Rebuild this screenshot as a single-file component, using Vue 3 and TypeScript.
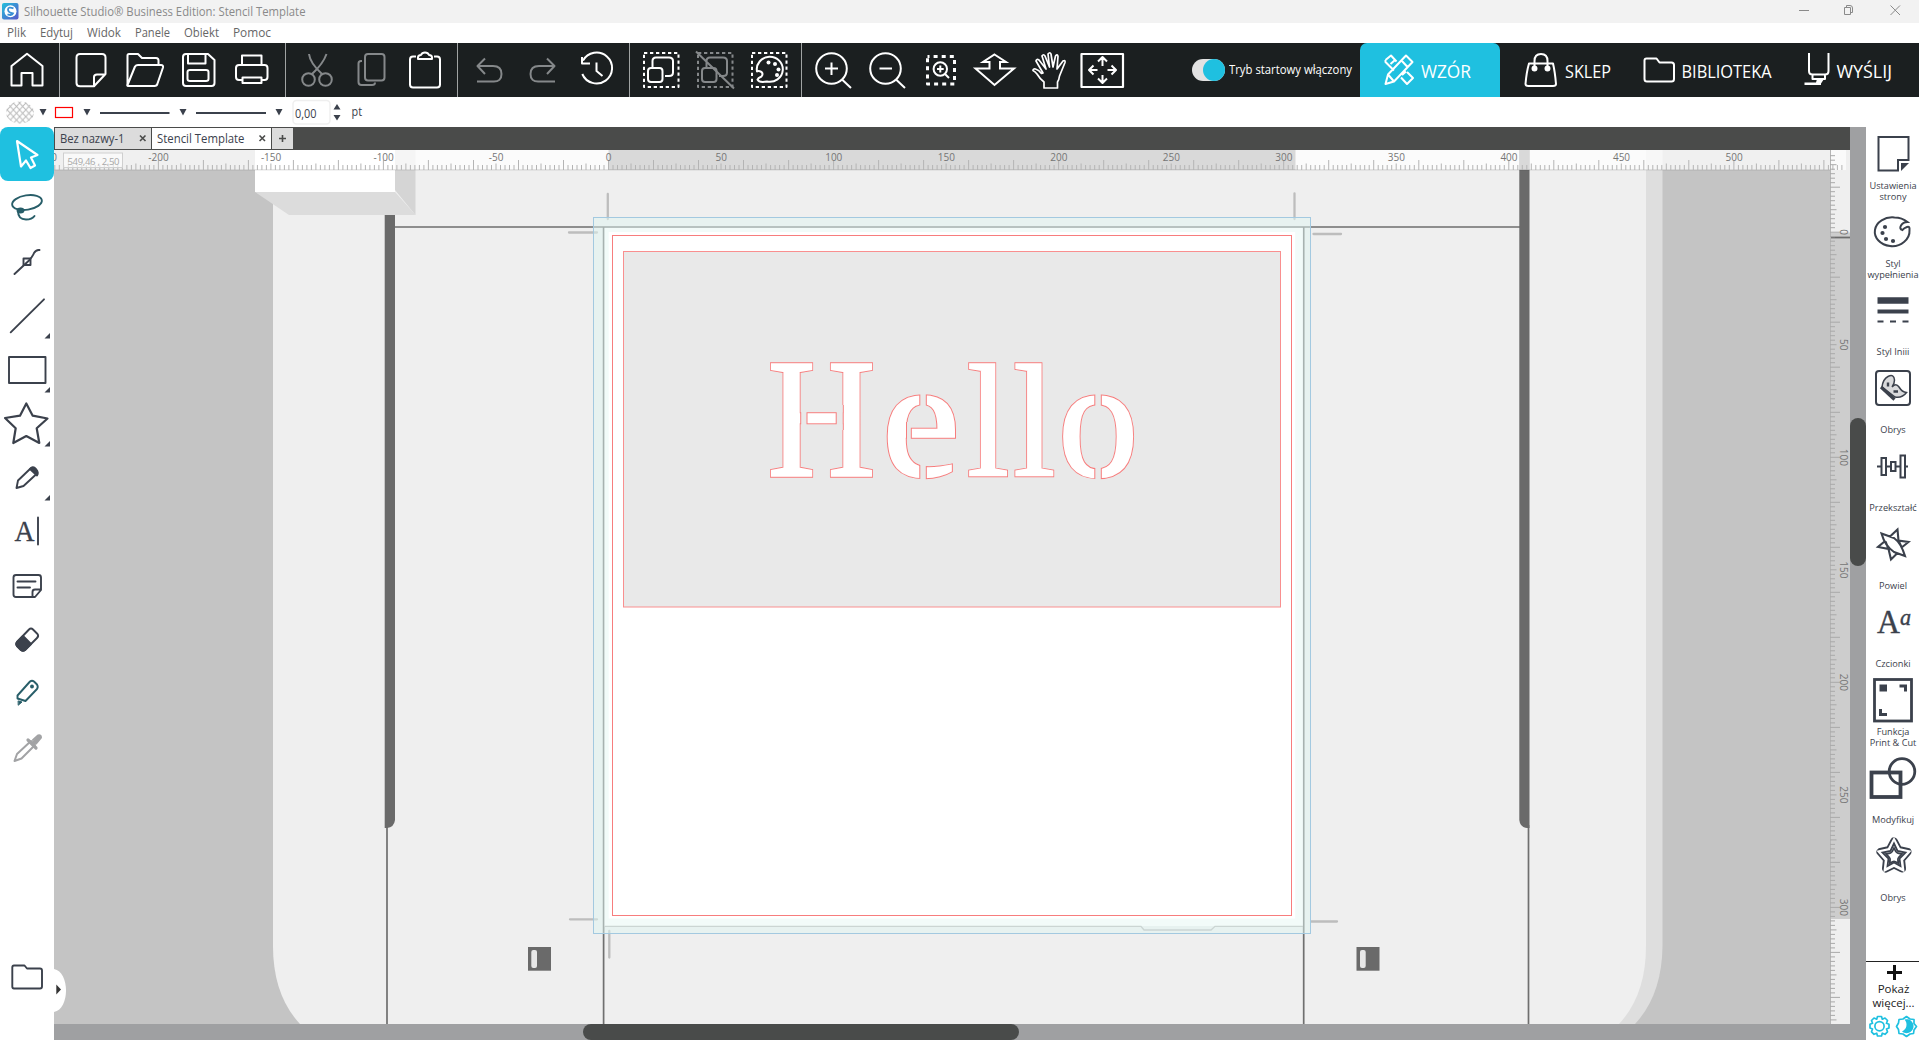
<script setup lang="ts">
interface Cell { x: number; w: number; art: string; dim?: boolean }
interface Label { text: string; x: number; w: number }

const menu: Label[] = [
  { text: 'Plik', x: 7, w: 19 },
  { text: 'Edytuj', x: 40, w: 33 },
  { text: 'Widok', x: 87, w: 34 },
  { text: 'Panele', x: 135, w: 35 },
  { text: 'Obiekt', x: 184, w: 35 },
  { text: 'Pomoc', x: 233, w: 38 },
]
const menuCells = menu.map((m, i) => ({ ...m, cell: (menu[i + 1]?.x ?? 280) - m.x }))

// Toolbar groups; every cell draws in window coordinates through its viewBox.
const groups: Cell[][] = [
  [{ x: 0, w: 59, art: '<path d="M11.500 85.500V66L27 53.800 42.500 66V85.500H32.500V73H21.500V85.500Z"/>' }],
  [
    { x: 60, w: 57, art: '<path d="M80 54H102Q105.500 54 105.500 57.500V74L94 86.200H80Q76.500 86.200 76.500 83V57.500Q76.500 54 80 54ZM94 86V77Q94 74.500 97 74.500H105"/>' },
    { x: 117, w: 55, art: '<path d="M127.500 84V55.500Q127.500 54 129 54H138L142 58H156Q158.500 58 158.500 60.500V65M127.300 85.500 135 66.500Q136 65 138 65H161Q163.500 65 163 67.500L157.500 83.500Q157 86 154.500 86H128Q127 86 127.300 84.500"/>' },
    { x: 172, w: 54, art: '<path d="M186 54H208L214.500 60V83Q214.500 86 211.500 86H186Q183 86 183 83V57Q183 54 186 54ZM188 54V63.500H205.500V54M190 70H206Q208.500 70 208.500 72V79Q208.500 81 206 81H190Q187.500 81 187.500 79V72Q187.500 70 190 70Z"/>' },
    { x: 226, w: 59, art: '<path d="M242 65V55.500H261.500V65M242 80H239Q236 80 236 77V68Q236 65 239 65H264.500Q267.500 65 267.500 68V77Q267.500 80 264.500 80H261.500M242.500 77.500H261.500V83H242.500Z"/>' },
  ],
  [
    { x: 286, w: 57, dim: true, art: '<circle cx="308.500" cy="79.500" r="6.300"/><circle cx="325.500" cy="79.500" r="6.300"/><path d="M309 54Q310 63 322 74M326.500 54Q323 64 312 74"/>' },
    { x: 343, w: 52, dim: true, art: '<rect x="365" y="54" width="19.500" height="26.500" rx="3"/><path d="M362 61H361Q358.500 61 358.500 63.500V82Q358.500 85 361.500 85H372Q375 85 375 82.500"/>' },
    { x: 395, w: 62, art: '<path d="M416 56.500H413Q410 56.500 410 59.500V84.500Q410 87.500 413 87.500H437Q440 87.500 440 84.500V59.500Q440 56.500 437 56.500H434M418 57.500Q418 55 421 55Q422 52.500 425 52.500T429 55Q432 55 432 57.500V59H418Z"/>' },
  ],
  [
    { x: 458, w: 61, dim: true, art: '<path d="M485 58.500 477.500 66 485 74M478 66H493Q501.500 66 501.500 74T493 81.500H477"/>' },
    { x: 519, w: 52, dim: true, art: '<path d="M547 58.500 554.500 66 547 74M554 66H539Q530.500 66 530.500 74T539 81.500H555"/>' },
    { x: 571, w: 58, art: '<path d="M583 60.500A15.500 15.500 0 1 1 582.300 74M582 57V63.500H590M596.500 62.500V71L602.500 76"/>' },
  ],
  [
    { x: 630, w: 57, art: '<rect x="644" y="53" width="34.500" height="34" stroke-dasharray="3.300 2.700"/><path d="M652.500 67V61Q652.500 57.500 656 57.500H669Q673 57.500 673 61V72.500Q673 76 669 76H665"/><rect x="648" y="68" width="14.500" height="14" rx="3"/>' },
    { x: 687, w: 54, dim: true, art: '<rect x="698" y="53" width="34.500" height="34" stroke-dasharray="3.300 2.700"/><path d="M706.500 67V61Q706.500 57.500 710 57.500H723Q727 57.500 727 61V72.500Q727 76 723 76H719M696 51.500 734 88.500"/><rect x="702" y="68" width="14.500" height="14" rx="3"/>' },
    { x: 741, w: 60, art: '<rect x="752" y="53" width="34.500" height="34" stroke-dasharray="3.300 2.700"/><path d="M757 71.500A13 12.500 0 1 1 767 81.500Q759 83 757.500 79.500Q758 78 761.500 76.500Q763.500 74 761.500 72Q758.500 70.500 757 71.500Z"/><g fill="#fff" stroke="none"><circle cx="768.500" cy="62.500" r="2"/><circle cx="775" cy="64" r="2"/><circle cx="778.500" cy="69.500" r="2"/><circle cx="777" cy="75" r="2"/></g>' },
  ],
  [
    { x: 802, w: 58, art: '<circle cx="831.500" cy="68.500" r="15.300"/><path d="M842 79.500 851 88M831.500 62.500V75M825 68.500H838"/>' },
    { x: 860, w: 54, art: '<circle cx="885.500" cy="68.500" r="15.300"/><path d="M896 79.500 905 88M879.500 68.500H892"/>' },
    { x: 914, w: 52, art: '<rect x="927.500" y="56.500" width="27" height="27.500" stroke-width="3" stroke-dasharray="4 4.100" stroke-dashoffset="2"/><circle cx="940.300" cy="69" r="6.700"/><path d="M945 74 949 78M940.300 65.500V72.500M937 69H943.700"/>' },
    { x: 966, w: 60, art: '<path d="M994.500 54.500 1006 62H1000V68.500H1014L994.500 85 975.500 68.500H989.500V62H983Z" stroke-linejoin="miter"/>' },
    { x: 1026, w: 46, art: '<path stroke-width="1.700" d="M1044 88V82Q1040 79 1037 74Q1035 71.500 1033 70.500Q1033 68.500 1035.500 69Q1039 70 1041.500 73.500L1043 73 1036 61Q1036.500 58.500 1039 60L1046 69 1042 56Q1043.500 53.500 1045 56L1049.500 67 1048 54Q1050 51.500 1051 54L1053 67 1055.500 56Q1057.500 53.500 1058 56.500L1057 69 1063 61Q1065.500 59.500 1065 62.500L1059.500 76Q1059 80 1057.500 82V88Z"/>' },
    { x: 1072, w: 60, art: '<rect x="1081.500" y="54" width="41.500" height="33" stroke-width="2.200"/><path d="M1102.500 57.500V66M1102.500 75V83M1089.500 70H1097.500M1107.500 70H1116M1098 61.500 1102.500 57 1107 61.500M1098 78.500 1102.500 83 1107 78.500M1093.500 65.500 1089 70 1093.500 74.500M1111.500 65.500 1116 70 1111.500 74.500"/>' },
  ],
]

const nav = [
  { text: 'WZÓR', x: 1360, w: 140, tx: 1421, tw: 50, active: true, art: '<path d="M1385.500 60 1391 55.500 1396.500 61.500M1407 72 1413 78 1407 84 1401 77.500M1394 70.500 1385.500 62V60M1390.500 64 1394.500 60.500M1402 75 1406 71.500M1385.500 84 1388 74.500 1406 55.500 1412.500 62 1394 81.500ZM1388 74.500 1394 81.500M1401.500 60.500 1407.500 67"/>' },
  { text: 'SKLEP', x: 1500, w: 125, tx: 1565, tw: 46, art: '<path d="M1529 63.500H1553Q1555 72 1556 84Q1556 86 1553 86H1528.500Q1525.500 86 1525.500 84Q1526.500 72 1529 63.500ZM1534.500 68V61Q1534.500 54 1541 54T1547.500 61V68"/><circle cx="1534.500" cy="68.500" r="2" fill="#fff"/><circle cx="1547.500" cy="68.500" r="2" fill="#fff"/>' },
  { text: 'BIBLIOTEKA', x: 1625, w: 160, tx: 1681.500, tw: 90, art: '<path d="M1646.500 58.500H1656.500L1659.500 62.500H1671.500Q1674 62.500 1674 65V79Q1674 81.500 1671.500 81.500H1647Q1644.500 81.500 1644.500 79V60.500Q1644.500 58.500 1646.500 58.500Z"/>' },
  { text: 'WYŚLIJ', x: 1785, w: 134, tx: 1836.500, tw: 55.500, art: '<path d="M1809 53V71Q1809 74.500 1812.500 74.500H1825Q1828.500 74.500 1828.500 71V53M1812.500 75V79H1825V75"/><path d="M1817 79H1824L1821 83.500V85H1804.500V82.500H1816Z" fill="#fff" stroke="none"/>' },
]

const tools: { art: string; more?: boolean; active?: boolean }[] = [
  { active: true, art: '<path stroke="#fff" stroke-width="2.200" d="M17 141 37.500 155 31 157.500 35 165.500 30.500 168 26 160.500 21 166.500Z"/>' },
  { art: '<g stroke="#285e69"><ellipse cx="27" cy="202.500" rx="15" ry="7.200" transform="rotate(-9 27 202.500)"/><path d="M18 211Q18 219.500 26 219.500 32 219.500 34.500 216"/><ellipse cx="20.500" cy="210.500" rx="3" ry="2" fill="#285e69"/></g>' },
  { art: '<path d="M14.500 274 29 260.500Q33 256 34 253 36 249.500 39.500 250"/><rect x="23.500" y="258.500" width="7" height="6.500"/>' },
  { more: true, art: '<path d="M10.700 332.300 44 299.300"/>' },
  { more: true, art: '<rect x="9" y="357" width="36.500" height="26"/>' },
  { more: true, art: '<path stroke-width="2.200" d="M26.300 403.500 32.700 415.700 47.500 418.500 36.700 428.300 39.300 443 26.300 436 13.300 443 15.700 428.300 5 418 20 415.700Z"/>' },
  { more: true, art: '<path d="M16.500 488 18 480.500 30.500 468.500Q33 466.500 35.500 469.500T36.500 474L23.500 486Z"/><path d="M30 469Q33 465.500 36 469T37 475.500Z" fill="#3b414c"/>' },
  { art: '<text x="14.500" y="540.500" font-size="30" textLength="20" lengthAdjust="spacingAndGlyphs" font-family="Liberation Serif,serif" fill="#3b414c" stroke-width=".3">A</text><path d="M38 517.500V544.500"/>' },
  { art: '<path d="M16 575H38.500Q41 575 41 577.500V590L35 597H16Q13.500 597 13.500 594.500V577.500Q13.500 575 16 575ZM32.500 597V592Q32.500 589.500 35 589.500H41M17.500 581.500H35.500M17.500 587.500H30"/>' },
  { art: '<path d="M29 629.500Q31 627.500 33 629.500L37.500 634Q39 636 37 638L25 650Q23 651.500 21 650L17 646Q15.500 644 17 642Z"/><path d="M23 636 31 644 25 650Q23 651.500 21 650L17 646Q15.500 644 17 642Z" fill="#3b414c"/>' },
  { art: '<g stroke="#285e69"><path d="M17.500 695.500 30 681.500Q32 680 34 681.500L37 684.500Q38.500 687 37 689L25.500 701 17.500 698.500Z"/><circle cx="32" cy="686.500" r="1" fill="#285e69"/><path d="M18.500 701 22 702 18.500 705Z" fill="#285e69" stroke-width="1"/></g>' },
  { art: '<g stroke="#a2a3a5" stroke-width="2"><path d="M14.500 761 17 754 31 741 35 745 21.500 758.500Z"/><path d="M28 740 36 748M34 742.500 39.500 737" stroke-width="3.200"/><path d="M33 740 38 735.500Q41 734.500 41 737.500L36 743.500"/></g>' },
]

const panels: { lines: string[]; art: string }[] = [
  { lines: ['Ustawienia', 'strony'], art: '<path d="M1908.500 160V137H1878.500V170.500H1898V160Z"/><path d="M1901 163H1909L1901 171Z" fill="#3b414c" stroke="none"/>' },
  { lines: ['Styl', 'wypełnienia'], art: '<g transform="translate(1 0)"><path d="M1906.500 222Q1901 217.500 1893.500 217.500A17 14 0 0 0 1889 246Q1897 247 1903 242T1908.500 230Q1909 226 1906 227T1901.500 230Q1898 229 1900 225.500T1906.500 222Z"/><g fill="#3b414c" stroke="none"><circle cx="1884" cy="227" r="2.100"/><circle cx="1881.500" cy="233" r="2.100"/><circle cx="1885" cy="239" r="2.100"/><circle cx="1892" cy="241" r="2.100"/></g></g>' },
  { lines: ['Styl Iniii'], art: '<path d="M1877.500 300.500H1908.500" stroke-width="6.500"/><path d="M1877.500 311.500H1908.500" stroke-width="4"/><path d="M1877.500 321.500H1908.500" stroke-dasharray="6 6.500"/>' },
  { lines: ['Obrys'], art: '<rect x="1876" y="371" width="34" height="34" rx="3"/><path fill="#d9dadc" stroke-width="1.500" d="M1882 387Q1883 379 1888 376.500 1894 373.500 1894.500 380 1894.500 384 1892 387 1896 382.500 1899 387 1902 392 1906.500 392.500 1902 398.500 1895 397Z"/><path d="M1881 387 1894.500 399.500" stroke-width="3.200"/><path d="M1888 382.500V386.500M1893.500 391.500H1898" stroke-width="2.400"/>' },
  { lines: ['Przekształć'], art: '<path d="M1877 466.500H1881M1886 466.500H1890.500M1896 466.500H1900.500M1905 466.500H1908"/><rect x="1881.500" y="458" width="4.500" height="17"/><rect x="1891" y="462" width="4.500" height="9"/><rect x="1900.500" y="455.500" width="4.500" height="22"/>' },
  { lines: ['Powiel'], art: '<path stroke-width="2.100" d="M1881.500 533.500 1894 538Q1901 543 1905 556L1894 552Q1885 546 1881.500 533.500ZM1890 536.500 1897.500 529.500 1898.500 540.500 1908.500 542 1901 548M1884.500 541.500 1878 547 1888.500 549 1891 559.500 1897.500 553M1888.500 549 1885.500 541.500M1898.500 540.500 1901.500 547"/>' },
  { lines: ['Czcionki'], art: '<text x="1877" y="633" font-size="33" textLength="34" lengthAdjust="spacingAndGlyphs" font-family="Liberation Serif,serif" fill="#3b414c" stroke-width=".4">A<tspan dy="-8" font-size="23" font-style="italic">a</tspan></text>' },
  { lines: ['Funkcja', 'Print & Cut'], art: '<rect x="1874.500" y="679.500" width="37" height="41.500" stroke-width="2.800"/><path d="M1879.500 684.500H1887V691.500H1879.500Z" fill="#3b414c" stroke="none"/><path d="M1899.500 686H1905.500V691.500M1880.500 709V714.500H1887" stroke-width="3"/>' },
  { lines: ['Modyfikuj'], art: '<rect x="1871.500" y="772.500" width="29" height="24.500" stroke-width="3.800"/><circle cx="1902" cy="771.500" r="12.800" stroke-width="2.800"/>' },
  { lines: ['Obrys'], art: '<path stroke-width="8" stroke-linejoin="round" d="M1894 841.500 1898.500 850 1907.500 852 1901 859.500 1902 868.500 1894 864.500 1886 868.500 1887 859.500 1880.500 852 1889.500 850Z"/><path stroke="#fff" stroke-width="4.300" d="M1894 841.500 1898.500 850 1907.500 852 1901 859.500 1902 868.500 1894 864.500 1886 868.500 1887 859.500 1880.500 852 1889.500 850Z"/><path stroke-width="1.800" d="M1894 843.500 1897.500 851 1905.500 852.500 1899.500 858.500 1900.500 866 1894 862.500 1887.500 866 1888.500 858.500 1882.500 852.500 1890.500 851Z"/>' },
]

// Stencil lettering: each letter is fattened by its stroke and cut by narrow bridges.
const letters = [
  { ch: 'H', x: 767.8, y: 475.2, sx: 0.868, sy: 0.992 },
  { ch: 'e', x: 882.2, y: 475.2, sx: 1.018, sy: 0.978 },
  { ch: 'l', x: 967.3, y: 475.2, sx: 0.875, sy: 0.93 },
  { ch: 'l', x: 1013.5, y: 475.2, sx: 0.875, sy: 0.93 },
  { ch: 'o', x: 1058.3, y: 475.2, sx: 0.93, sy: 0.978 },
]
const bridges = [
  { x: 801.2, y: 405, w: 5.3, h: 25 },
  { x: 836.7, y: 405, w: 6, h: 25 },
  { x: 920.3, y: 388, w: 5.5, h: 24 },
  { x: 920.3, y: 452, w: 5.5, h: 32 },
  { x: 907, y: 422, w: 3.8, h: 17 },
  { x: 1095.3, y: 388, w: 5.5, h: 24 },
  { x: 1095.3, y: 456, w: 5.5, h: 28 },
]

const PX_PER_MM = 2.2507
const ticks = (from: number, to: number) => {
  const out: { mm: number; size: number }[] = []
  for (let mm = from; mm <= to; mm += 2) out.push({ mm, size: mm % 20 === 0 ? 10 : mm % 10 === 0 ? 6.500 : 5 })
  return out
}
const hx = (mm: number) => 608.5 + mm * PX_PER_MM
const vy = (mm: number) => 232.2 + mm * PX_PER_MM
const hPath = ticks(-246, 548).map(t => `M${hx(t.mm).toFixed(1)} 170v${-t.size}`).join('')
const vPath = ticks(-34, 350).map(t => `M1830 ${vy(t.mm).toFixed(1)}h${t.size}`).join('')
const hLabels = Array.from({ length: 15 }, (_, i) => -200 + i * 50)
const vLabels = Array.from({ length: 7 }, (_, i) => i * 50)
</script>

<template>
  <div class="app">
    <header class="title">
      <svg class="logo" width="17" height="17" viewBox="0 0 17 17">
        <defs><linearGradient id="lg" x2="1" y2="1"><stop stop-color="#22c1dd" /><stop offset="1" stop-color="#5a55c8" /></linearGradient></defs>
        <rect width="16.500" height="16.500" rx="2" fill="url(#lg)" />
        <circle cx="8.500" cy="8.300" r="6" fill="#fff" />
        <path d="M11.500 5.300Q6 3.500 6 6.500T11 10.500Q10 13 5.500 11.300" fill="none" stroke="#3a8fd4" stroke-width="1.800" />
      </svg>
      <svg width="300" height="23"><text x="0" y="15.500" textLength="281.500" lengthAdjust="spacingAndGlyphs">Silhouette Studio® Business Edition: Stencil Template</text></svg>
      <svg class="win" width="119" height="23" viewBox="1800 0 119 23">
        <path d="M1799 10.500H1809M1844.500 7.500H1850.500V14.500H1844.500ZM1846.500 7.500V5.500H1850Q1852.500 5.500 1852.500 8V12.500H1850.500M1890.500 5.500 1900 15M1900 5.500 1890.500 15" />
      </svg>
    </header>
    <nav class="menu">
      <svg v-for="m in menuCells" :key="m.text" :width="m.cell" height="20"><text x="0" y="14" :textLength="m.w" lengthAdjust="spacingAndGlyphs">{{ m.text }}</text></svg>
    </nav>
    <div class="bar">
      <div v-for="(g, i) in groups" :key="i" class="group">
        <svg v-for="c in g" :key="c.x" :class="{ dim: c.dim }" :width="c.w" height="54" :viewBox="`${c.x} 43 ${c.w} 54`" v-html="c.art" />
      </div>
      <div class="spacer" />
      <div class="switch"><i /></div>
      <svg class="start" width="131" height="54"><text x="0" y="31" textLength="123" lengthAdjust="spacingAndGlyphs">Tryb startowy włączony</text></svg>
      <div v-for="n in nav" :key="n.text" class="nav" :class="{ active: n.active }">
        <svg :width="n.w" height="54" :viewBox="`${n.x} 43 ${n.w} 54`">
          <g v-html="n.art" />
          <text :x="n.tx" y="78" :textLength="n.tw" lengthAdjust="spacingAndGlyphs">{{ n.text }}</text>
        </svg>
      </div>
    </div>
    <div class="options">
      <svg width="380" height="30" viewBox="0 97 380 30">
        <defs><pattern id="hatch" width="6.200" height="6.800" patternUnits="userSpaceOnUse" patternTransform="translate(1 1)"><path d="M0 0 6.200 6.800M6.200 0 0 6.800" stroke="#b9b9b9" stroke-width="1" /></pattern></defs>
        <ellipse cx="20" cy="112.500" rx="14" ry="11" fill="url(#hatch)" />
        <rect x="55.500" y="107.500" width="17" height="10" fill="none" stroke="#f00" stroke-width="1.200" />
        <path d="M100 113H169.500M196 113H266" stroke="#3b414c" stroke-width="2" />
        <g fill="#3b414c"><path d="M39.500 109H46.500L43 115.500ZM83.500 109H90.500L87 115.500ZM179.500 109H186.500L183 115.500ZM275.500 109H282.500L279 115.500ZM333.500 109.500H340.500L337 104ZM333.500 115H340.500L337 120.500Z" /></g>
        <rect x="293" y="100.500" width="37" height="23.500" rx="3.500" fill="#fff" stroke="#efefef" stroke-width="1.500" />
        <text x="295" y="118" textLength="21.500" lengthAdjust="spacingAndGlyphs">0,00</text>
        <text x="351.500" y="116" textLength="10.500" lengthAdjust="spacingAndGlyphs">pt</text>
      </svg>
    </div>
    <main>
      <aside class="tools">
        <button v-for="(t, i) in tools" :key="i" :class="{ active: t.active }">
          <svg width="54" height="54" :viewBox="`0 ${127 + i * 54} 54 54`">
            <g v-html="t.art" />
            <path v-if="t.more" class="more" :d="`M44.500 ${176.500 + i * 54}h5.500v-5.500z`" />
          </svg>
        </button>
        <div class="spacer" />
        <svg width="54" height="84" viewBox="0 956 54 84"><path d="M14 965.500H24.500L27 968.500H40Q42 968.500 42 970.500V986.500Q42 988.500 40 988.500H14Q12.300 988.500 12.300 986.500V967.500Q12.300 965.500 14 965.500Z" /></svg>
      </aside>
      <section class="work">
        <div class="tabs">
          <div class="tab t1"><svg width="96" height="21"><text x="5" y="14.500" textLength="64.500" lengthAdjust="spacingAndGlyphs">Bez nazwy-1</text><path d="M85 7.500 90.500 13M90.500 7.500 85 13" /></svg></div>
          <div class="tab on"><svg width="119" height="21"><text x="5" y="14.500" textLength="87.500" lengthAdjust="spacingAndGlyphs">Stencil Template</text><path d="M107.500 7.500 113 13M113 7.500 107.500 13" /></svg></div>
          <div class="tab"><svg width="21" height="21"><path d="M7 10.500H14M10.500 7V14" /></svg></div>
        </div>
        <svg class="canvas" width="1796" height="874" viewBox="54 150 1796 874">
          <defs>
            <mask id="cutEdge" maskUnits="userSpaceOnUse" x="740" y="330" width="430" height="180">
              <rect x="740" y="330" width="430" height="180" fill="#fff" />
              <rect v-for="(b, i) in bridges" :key="i" :x="b.x" :y="b.y" :width="b.w" :height="b.h" fill="#000" />
            </mask>
            <mask id="cutFill" maskUnits="userSpaceOnUse" x="740" y="330" width="430" height="180">
              <rect x="740" y="330" width="430" height="180" fill="#fff" />
              <rect v-for="(b, i) in bridges" :key="i" :x="b.x - 1" :y="b.y" :width="b.w + 2" :height="b.h" fill="#000" />
            </mask>
          </defs>
          <rect x="54" y="150" width="1796" height="874" fill="#c4c4c4" />
          <path d="M1640 150H1662.500V946Q1662 995 1635 1024H1600Z" fill="#dedede" />
          <path d="M273 150H1646V946Q1646 995 1619 1024H300Q273 995 273 946Z" fill="#efefef" />
          <path d="M255 192H395L415.500 215H289Z" fill="#dcdcdc" />
          <path d="M395 150H415.500V215L395 190Z" fill="#d5d5d5" />
          <path d="M255 150H395V192H255Z" fill="#fff" />
          <path d="M395 227H1520M387 825V1024M1528.500 825V1024M603.600 227V1024M1303.700 227V1024" stroke="#6f6f6f" stroke-width="1.700" fill="none" />
          <path d="M384.700 215H395V820Q394 827.500 387 828H384.700Z" fill="#6a6a6a" />
          <path d="M1519.300 150H1529.500V828H1527Q1520 827.500 1519.300 820Z" fill="#6a6a6a" />
          <g fill="#6a6a6a"><rect x="528" y="947" width="23" height="23.700" /><rect x="1356.500" y="947" width="23" height="23.700" /></g>
          <g fill="#e8e8e8"><rect x="531.300" y="950" width="5.700" height="18" rx="2" /><rect x="1360" y="950" width="5.700" height="18" rx="2" /></g>
          <path d="M607.800 194V219M569 232.500H597M1294.500 193.500V219M1313.500 234H1341M570 919.300H597M609.300 931V957.500M1311 921.500H1337" stroke="#bdbdbd" stroke-width="2.300" stroke-linecap="round" />
          <rect x="593.500" y="217.500" width="717" height="716" fill="#e0f5f1" fill-opacity=".5" stroke="#a3c9e0" />
          <rect x="604.700" y="228" width="698" height="698" fill="#f2fbf9" />
          <path d="M604.500 926.300H1141L1144 930H1211L1215 926.300H1303" fill="none" stroke="#cbd5d3" stroke-width="1.300" />
          <rect x="608.700" y="232" width="686.500" height="686.500" fill="#fff" />
          <rect x="612.500" y="235.500" width="679" height="680" fill="none" stroke="#f77d7d" />
          <rect x="623.500" y="251.500" width="657" height="355.500" fill="#e9e9e9" stroke="#f98f8f" />
          <g class="hello edge" mask="url(#cutEdge)" aria-hidden="true">
            <text v-for="(l, i) in letters" :key="i" :transform="`translate(${l.x} ${l.y}) scale(${l.sx} ${l.sy})`">{{ l.ch }}</text>
          </g>
          <g class="hello" mask="url(#cutFill)">
            <text v-for="(l, i) in letters" :key="i" :transform="`translate(${l.x} ${l.y}) scale(${l.sx} ${l.sy})`">{{ l.ch }}</text>
          </g>
          <rect x="54" y="150" width="1776" height="20" fill="#fff" fill-opacity=".750" />
          <rect x="608.500" y="150" width="687" height="20" fill="#d9d9d9" />
          <rect x="1519.300" y="150" width="10.300" height="20" fill="#d9d9d9" />
          <rect x="54" y="169" width="1776" height="1.500" fill="#000" fill-opacity=".1" />
          <rect x="1830" y="150" width="20" height="874" fill="#efefef" />
          <rect x="1830" y="150" width="16" height="20" fill="#fafafa" />
          <rect x="1830" y="232.500" width="20" height="686.500" fill="#cdcdcd" />
          <path d="M1830 237.500H1850" stroke="#6c6c6c" stroke-width="1.800" />
          <path d="M1830.500 150V1024" stroke="#b5b5b5" stroke-width="1" />
          <path :d="hPath" stroke="#b4b4b4" stroke-width="1" />
          <path :d="vPath" stroke="#a9a9a9" stroke-width="1" />
          <g class="num">
            <text v-for="n in hLabels" :key="n" :x="hx(n) + .2" y="161">{{ n }}</text>
            <text x="54" y="161">0</text>
            <text v-for="n in vLabels" :key="'v' + n" :transform="`translate(1839.500 ${vy(n)}) rotate(90)`">{{ n }}</text>
          </g>
          <rect x="63.500" y="153" width="59" height="14.500" fill="#fff" fill-opacity=".6" stroke="#cfcfcf" />
          <text class="coord" x="67.500" y="165" textLength="52">549,46 , 2,50</text>
          <path d="M54 969C70 972 70 1009 54 1012Z" fill="#fff" />
          <path d="M56.300 984.500 61 989.500 56.300 994.500Z" fill="#333" />
        </svg>
        <div class="hscroll"><i /></div>
      </section>
      <div class="vscroll"><i /></div>
      <aside class="panels">
        <div v-for="(p, i) in panels" :key="i" class="panel">
          <svg width="53" :height="i ? 56 : 53" :viewBox="i ? `1866 ${124 + i * 78} 53 56` : '1866 127 53 53'" v-html="p.art" />
          <div class="cap" :class="{ single: p.lines.length === 1 }"><span v-for="l in p.lines" :key="l">{{ l }}</span></div>
        </div>
        <div class="spacer" />
        <div class="moreBox">
          <svg width="53" height="21" viewBox="1866 962 53 21"><path d="M1894.500 965V980M1887 972.500H1902" stroke="#111" stroke-width="3" /></svg>
          <span>Pokaż</span><span>więcej...</span>
          <svg class="gears" width="53" height="30" viewBox="1866 1010 53 30">
            <path d="M1877.500 1016.500H1881.500L1882.300 1019.200 1885 1018 1887.500 1020.500 1886.500 1023.300 1889 1024.300V1028L1886.500 1029 1887.500 1031.800 1885 1034.300 1882.300 1033.200 1881.500 1036H1877.500L1876.700 1033.200 1874 1034.300 1871.500 1031.800 1872.500 1029 1870 1028V1024.300L1872.500 1023.300 1871.500 1020.500 1874 1018 1876.700 1019.200Z" />
            <circle cx="1879.500" cy="1026.200" r="4.600" />
            <path d="M1906.500 1016.500 1910 1019 1914 1019.500 1914 1023.500 1916.500 1026.500 1914 1030 1913.500 1033.500 1910 1034 1906.500 1036.500 1903 1034 1899 1033.500 1898.500 1029.500 1896.500 1026.500 1898.500 1023 1899 1019.500 1903 1019Z" stroke-width="1.700" />
            <path d="M1904.500 1019.500A7 7 0 1 1 1902 1031.500A7.500 7.500 0 0 0 1904.500 1019.500Z" fill="#1fc0e0" stroke="none" />
          </svg>
        </div>
      </aside>
    </main>
  </div>
</template>

<style>
body { margin: 0; overflow: hidden; }
</style>
<style scoped>
.app { width: 1919px; height: 1040px; display: flex; flex-direction: column; background: #fff; font-family: "Open Sans", "Noto Sans", sans-serif; overflow: hidden; }
svg { display: block; flex: none; }
.spacer { flex: 1; }
.title { height: 23px; background: #f2f2f2; display: flex; font-size: 12px; fill: #8a8a8a; }
.logo { margin: 3px 5px 0 2px; }
.win { margin-left: auto; overflow: visible; fill: none; stroke: #8a8a8a; }
.menu { height: 20px; display: flex; padding-left: 7px; font-size: 12px; fill: #666; }
.bar { height: 54px; background: #1b1f20; display: flex; }
.group { display: flex; border-right: 1px solid #a0a3a3; }
.group:nth-child(6) { border: 0; }
.group svg, .nav svg { fill: none; stroke: #fff; stroke-width: 2; stroke-linejoin: round; }
.group svg.dim { stroke: #85888a; }
.switch { width: 33px; height: 22px; margin: 16px 4px 0 0; border-radius: 11px; background: #e2e2e2; display: flex; justify-content: flex-end; }
.switch i { width: 22px; height: 22px; border-radius: 11px; background: #1fc0e0; }
.start { font-size: 12px; fill: #fff; }
.nav.active { background: #1fc0e0; border-radius: 7px 7px 0 0; }
.nav text { font-size: 18px; fill: #fff; stroke: none; }
.options { height: 30px; background: #fff; font-size: 13px; fill: #3b414c; }
main { display: flex; height: 913px; }
.tools { width: 54px; display: flex; flex-direction: column; }
.tools svg { fill: none; stroke: #3b414c; stroke-width: 1.9; stroke-linejoin: round; stroke-linecap: round; }
.tools button { width: 54px; height: 54px; padding: 0; border: 0; background: none; }
.tools button.active { background: #1fc0e0; border-radius: 8px; }
.tools .more { fill: #3b414c; stroke: none; }
.work { width: 1796px; }
.tabs { height: 23px; background: #4a4b4a; display: flex; gap: 1px; padding-left: 1px; box-sizing: border-box; }
.tab { height: 21px; margin-top: 1px; background: #dcdcdc; font-size: 12px; fill: #3b414c; stroke: none; }
.tab.on { background: #fff; }
.tab path { stroke: #4a4b4a; stroke-width: 1.6; }
.hello text { font: 171.5px "Liberation Serif", serif; fill: #fff; stroke: #fff; stroke-width: 2.6; stroke-linejoin: miter; }
.hello.edge text { fill: #f77d7d; stroke: #f77d7d; stroke-width: 4.6; }
.num { font-size: 10px; fill: #757575; text-anchor: middle; }
.coord { font-size: 9.5px; fill: #a8a8a8; }
.hscroll { height: 16px; width: 1812px; background: #9fa0a2; position: relative; }
.hscroll i { display: block; margin-left: 529px; width: 436px; height: 16px; border-radius: 8px; background: #494b4a; }
.vscroll { width: 16px; height: 913px; background: #9fa0a2; padding-top: 291px; box-sizing: border-box; }
.vscroll i { display: block; height: 148px; border-radius: 8px; background: #494b4a; }
.panels { width: 53px; height: 913px; display: flex; flex-direction: column; background: #fff; }
.panel { flex: none; display: flex; flex-direction: column; }
.panel svg { fill: none; stroke: #3b414c; stroke-width: 2; }
.cap { height: 22px; display: flex; flex-direction: column; justify-content: flex-end; align-items: center; box-sizing: border-box; margin-left: 1px; font-size: 9.2px; line-height: 11px; color: #3b414c; white-space: nowrap; }
.cap.single { padding-bottom: 1px; }
.moreBox { border-top: 1px solid #222; display: flex; flex-direction: column; align-items: center; height: 78px; font-size: 11.5px; line-height: 14px; color: #222; }
.moreBox span { margin: -1px 0 1px 2px; }
.moreBox .gears { margin-top: -1px; fill: none; stroke: #1fc0e0; stroke-width: 1.7; stroke-linejoin: round; }
</style>
